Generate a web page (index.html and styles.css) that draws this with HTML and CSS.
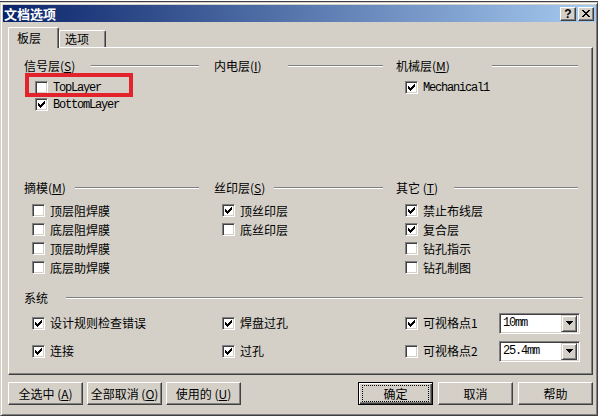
FILE: index.html
```html
<!DOCTYPE html>
<html lang="zh">
<head>
    <meta charset="UTF-8">
    <title>文档选项</title>
    <link rel="stylesheet" href="styles.css">
</head>
<body>
    <!-- shared glyphs: checkbox tick, combo arrow -->
    <svg class="defs" width="0" height="0">
        <symbol id="tick" viewBox="0 0 7 7"><path d="M0 2H1V3H2V4H3V3H4V2H5V1H6V0H7V3H6V4H5V5H4V6H3V7H2V6H1V5H0Z"/></symbol>
        <symbol id="down" viewBox="0 0 7 4"><path d="M0 0H7V1H6V2H5V3H4V4H3V3H2V2H1V1H0Z"/></symbol>
    </svg>

    <div class="strip"></div>
    <div class="window">
        <div class="titlebar">
            <span class="title">文档选项</span>
            <span class="cap-btn help">?</span>
            <span class="cap-btn close">
                <svg width="8" height="7" viewBox="0 0 8 7"><path d="M0 0H2V1H3V2H5V1H6V0H8V1H7V2H6V3H5V4H6V5H7V6H8V7H6V6H5V5H3V6H2V7H0V6H1V5H2V4H3V3H2V2H1V1H0Z"/></svg>
            </span>
        </div>

        <div class="client">
            <div class="tabs">
                <div class="tab active">板层</div>
                <div class="tab">选项</div>
            </div>

            <div class="panel">
                <div class="row row-layers">
                    <div class="group col1">
                        <div class="legend"><span>信号层(<u>S</u>)</span><i></i></div>
                        <div class="items tight">
                            <div class="item"><span class="box"></span><span class="mono">TopLayer</span></div>
                            <div class="item"><span class="box"><svg><use href="#tick"/></svg></span><span class="mono">BottomLayer</span></div>
                        </div>
                        <div class="mark"></div>
                    </div>
                    <div class="group col2">
                        <div class="legend wide"><span>内电层(<u>I</u>)</span><i></i></div>
                    </div>
                    <div class="group col3">
                        <div class="legend wider"><span>机械层(<u>M</u>)</span><i></i></div>
                        <div class="items tight">
                            <div class="item"><span class="box"><svg><use href="#tick"/></svg></span><span class="mono">Mechanical1</span></div>
                        </div>
                    </div>
                </div>

                <div class="row row-masks">
                    <div class="group col1">
                        <div class="legend narrow"><span>摘模(<u>M</u>)</span><i></i></div>
                        <div class="items">
                            <div class="item"><span class="box"></span><span>顶层阻焊膜</span></div>
                            <div class="item"><span class="box"></span><span>底层阻焊膜</span></div>
                            <div class="item"><span class="box"></span><span>顶层助焊膜</span></div>
                            <div class="item"><span class="box"></span><span>底层助焊膜</span></div>
                        </div>
                    </div>
                    <div class="group col2">
                        <div class="legend narrow"><span>丝印层(<u>S</u>)</span><i></i></div>
                        <div class="items">
                            <div class="item"><span class="box"><svg><use href="#tick"/></svg></span><span>顶丝印层</span></div>
                            <div class="item"><span class="box"></span><span>底丝印层</span></div>
                        </div>
                    </div>
                    <div class="group col3">
                        <div class="legend"><span>其它 (<u>T</u>)</span><i></i></div>
                        <div class="items">
                            <div class="item"><span class="box"><svg><use href="#tick"/></svg></span><span>禁止布线层</span></div>
                            <div class="item"><span class="box"><svg><use href="#tick"/></svg></span><span>复合层</span></div>
                            <div class="item"><span class="box"></span><span>钻孔指示</span></div>
                            <div class="item"><span class="box"></span><span>钻孔制图</span></div>
                        </div>
                    </div>
                </div>

                <div class="system">
                    <div class="legend sys"><span>系统</span><i></i></div>
                    <div class="sys-grid">
                        <div class="item"><span class="box"><svg><use href="#tick"/></svg></span><span>设计规则检查错误</span></div>
                        <div class="item"><span class="box"><svg><use href="#tick"/></svg></span><span>焊盘过孔</span></div>
                        <div class="item">
                            <span class="box"><svg><use href="#tick"/></svg></span><span>可视格点1</span>
                            <div class="combo"><span class="mono">10mm</span><span class="drop"><svg><use href="#down"/></svg></span></div>
                        </div>
                        <div class="item"><span class="box"><svg><use href="#tick"/></svg></span><span>连接</span></div>
                        <div class="item"><span class="box"><svg><use href="#tick"/></svg></span><span>过孔</span></div>
                        <div class="item">
                            <span class="box"></span><span>可视格点2</span>
                            <div class="combo"><span class="mono">25.4mm</span><span class="drop"><svg><use href="#down"/></svg></span></div>
                        </div>
                    </div>
                </div>
            </div>

            <div class="buttons">
                <button class="btn">全选中 (<u>A</u>)</button>
                <button class="btn">全部取消 (<u>O</u>)</button>
                <button class="btn">使用的 (<u>U</u>)</button>
                <div class="right">
                    <button class="btn default"><span>确定</span></button>
                    <button class="btn">取消</button>
                    <button class="btn">帮助</button>
                </div>
            </div>
        </div>
    </div>
</body>
</html>
```

FILE: styles.css
```css
* {
    margin: 0;
    padding: 0;
    box-sizing: border-box;
}
body {
    width: 598px;
    height: 416px;
    overflow: hidden;
    background-color: #fff;
    font-family: "Noto Sans CJK SC", sans-serif;
    font-size: 12px;
    line-height: 14px;
    color: #000;
}
u {
    text-decoration: underline;
}
.defs {
    position: absolute;
}
.strip {
    height: 2px;
    border-bottom: 1px solid #404040;
}
.mono {
    font-family: "Liberation Mono", monospace;
    font-size: 12px;
    letter-spacing: -1.2px;
}

/* window frame + caption */
.window {
    height: 414px;
    background-color: #d4d0c8;
    border: 1px solid;
    border-color: #d4d0c8 #404040 #404040 #d4d0c8;
    box-shadow: inset 1px 1px #fff, inset -1px -1px #808080;
    padding: 2px 1px 0 2px;
}
.titlebar {
    height: 17px;
    display: flex;
    align-items: center;
    gap: 2px;
    padding: 0 2px 0 1px;
    background: linear-gradient(to right, #0a246a, #a6caf0);
}
.title {
    flex: 1;
    color: #fff;
    font-weight: 700;
    font-size: 13px;
}
.cap-btn {
    width: 16px;
    height: 14px;
    display: flex;
    align-items: center;
    justify-content: center;
    background-color: #d4d0c8;
    border: 1px solid;
    border-color: #fff #404040 #404040 #fff;
    box-shadow: inset -1px -1px #808080;
    font-family: "Liberation Sans", sans-serif;
    font-weight: 700;
    font-size: 12px;
}
.close svg {
    display: block;
}

/* tabs */
.client {
    padding: 0 3px 0 5px;
}
.tabs {
    display: flex;
    align-items: flex-end;
    height: 20px;
    margin-top: 5px;
}
.tab {
    height: 17px;
    width: 47px;
    padding-left: 5px;
    display: flex;
    align-items: center;
    border: 1px solid;
    border-bottom: none;
    border-color: #fff #404040 #404040 #fff;
    border-radius: 2px 2px 0 0;
    box-shadow: inset -1px 0 #808080;
}
.tab.active {
    height: 21px;
    width: 51px;
    padding-left: 8px;
    margin-bottom: -1px;
    position: relative;
    z-index: 1;
    background-color: #d4d0c8;
}

/* tab page */
.panel {
    height: 328px;
    border: 1px solid;
    border-color: #fff #404040 #404040 #fff;
    box-shadow: inset -1px -1px #808080;
}
.row {
    display: grid;
    grid-template-columns: 190px 182px 185px;
    padding-left: 15px;
}
.row-layers {
    height: 133px;
    padding-top: 11px;
}
.row-masks {
    height: 110px;
}
.group {
    position: relative;
}
.col1 { padding-right: 15px; }
.col2 { padding-right: 13px; }
.col3 { padding-right: 3px; }

.legend {
    display: flex;
    align-items: center;
    height: 14px;
    white-space: nowrap;
}
.legend i {
    flex: 1;
    height: 2px;
    margin-left: 16px;
    border-top: 1px solid #808080;
    border-bottom: 1px solid #fff;
}
.legend.narrow i { margin-left: 9px; }
.legend.wide i { margin-left: 26px; }
.legend.wider i { margin-left: 42px; }
.legend.sys i { margin-left: 18px; }

.items {
    margin-top: 6px;
    padding-left: 8px;
}
.col1 .items.tight { padding-left: 11px; }
.col3 .items { padding-left: 9px; }
.item {
    display: flex;
    align-items: center;
    gap: 5px;
    height: 19px;
    white-space: nowrap;
}
.tight .item {
    height: 17px;
}
.tight .item:first-child {
    margin-top: 1px;
}

/* sunken checkbox */
.box {
    width: 13px;
    height: 13px;
    flex: none;
    padding: 2px;
    background-color: #fff;
    border: 1px solid;
    border-color: #808080 #fff #fff #808080;
    box-shadow: inset 1px 1px #404040, inset -1px -1px #d4d0c8;
}
.box svg {
    display: block;
    width: 7px;
    height: 7px;
}

/* highlight frame drawn on top of the signal layer list */
.mark {
    position: absolute;
    left: 1px;
    top: 14px;
    width: 108px;
    height: 24px;
    border: 4px solid #e3232b;
}

/* system block */
.system {
    padding: 0 9px 0 15px;
}
.sys-grid {
    display: grid;
    grid-template-columns: 190px 182px 185px;
    margin-top: 4px;
}
.sys-grid .item {
    height: 28px;
    padding-left: 8px;
}
.sys-grid .item:nth-child(3n) {
    padding-left: 9px;
    padding-right: 1px;
}
.combo {
    margin-left: auto;
    width: 81px;
    height: 21px;
    display: flex;
    align-items: center;
    justify-content: space-between;
    padding: 2px 2px 2px 3px;
    background-color: #fff;
    border: 1px solid;
    border-color: #808080 #fff #fff #808080;
    box-shadow: inset 1px 1px #404040, inset -1px -1px #d4d0c8;
}
.drop {
    width: 16px;
    height: 17px;
    display: flex;
    align-items: center;
    justify-content: center;
    background-color: #d4d0c8;
    border: 1px solid;
    border-color: #d4d0c8 #404040 #404040 #d4d0c8;
    box-shadow: inset 1px 1px #fff, inset -1px -1px #808080;
}
.drop svg {
    display: block;
    width: 7px;
    height: 4px;
}

/* push buttons */
.buttons {
    display: flex;
    gap: 4px;
    margin-top: 7px;
}
.buttons .right {
    display: flex;
    gap: 5px;
    margin-left: auto;
}
.btn {
    width: 75px;
    height: 23px;
    display: flex;
    align-items: center;
    justify-content: center;
    background-color: #d4d0c8;
    border: 1px solid;
    border-color: #fff #404040 #404040 #fff;
    box-shadow: inset -1px -1px #808080;
    font-family: "Noto Sans CJK SC", sans-serif;
    font-size: 12px;
    line-height: 14px;
    color: #000;
    white-space: pre;
}
.btn.default {
    border: 1px solid #000;
    box-shadow: inset 1px 1px #fff, inset -1px -1px #404040, inset -2px -2px #808080;
}
.btn.default span {
    width: 67px;
    height: 17px;
    display: flex;
    align-items: center;
    justify-content: center;
    border: 1px dotted #000;
}
```
